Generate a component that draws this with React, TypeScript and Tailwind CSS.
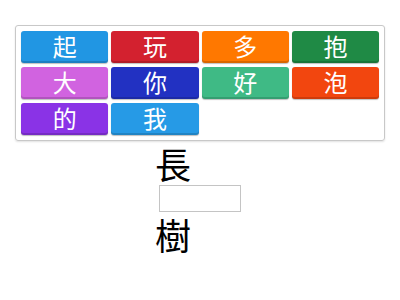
import React from 'react';

const tiles = [
  { ch: '起', cls: 'bg-[#2196e3]' },
  { ch: '玩', cls: 'bg-[#d3212f]' },
  { ch: '多', cls: 'bg-[#ff7800]' },
  { ch: '抱', cls: 'bg-[#1f8a45]' },
  { ch: '大', cls: 'bg-[#d163e0]' },
  { ch: '你', cls: 'bg-[#2231c2]' },
  { ch: '好', cls: 'bg-[#3fba85]' },
  { ch: '泡', cls: 'bg-[#f2460f]' },
  { ch: '的', cls: 'bg-[#8a33e6]' },
  { ch: '我', cls: 'bg-[#269ae6]' },
];

const App: React.FC = () => {
  return (
    <div className="w-[400px] h-[300px] bg-white font-['Noto_Sans_CJK_TC','Noto_Sans_CJK_SC',sans-serif]">
      <div className="pt-[25px] pl-[15px]">
        <div className="w-[370px] border border-[#c8c8c8] rounded-[3px] p-[5px] shadow-[0_1px_2px_rgba(0,0,0,0.12)]">
          <div className="grid grid-cols-4 gap-x-[3px] gap-y-[4px]">
            {tiles.map((t) => (
              <div
                key={t.ch}
                className={`${t.cls} h-[32px] rounded-[3px] flex items-center justify-center text-white text-[24px] leading-none pb-[2px] shadow-[inset_0_-2px_0_rgba(0,0,0,0.15),0_1px_1px_rgba(0,0,0,0.25)]`}
              >
                {t.ch}
              </div>
            ))}
          </div>
        </div>
      </div>
      <div className="pl-[155px] pt-[2px] flex flex-col items-start">
        <div className="text-[36px] leading-[40px] text-black">長</div>
        <div className="ml-[4px] mt-[2px] w-[82px] h-[27px] border border-[#c4c4c4]" />
        <div className="text-[36px] leading-[40px] text-black mt-[2px]">樹</div>
      </div>
    </div>
  );
};

export default App;
